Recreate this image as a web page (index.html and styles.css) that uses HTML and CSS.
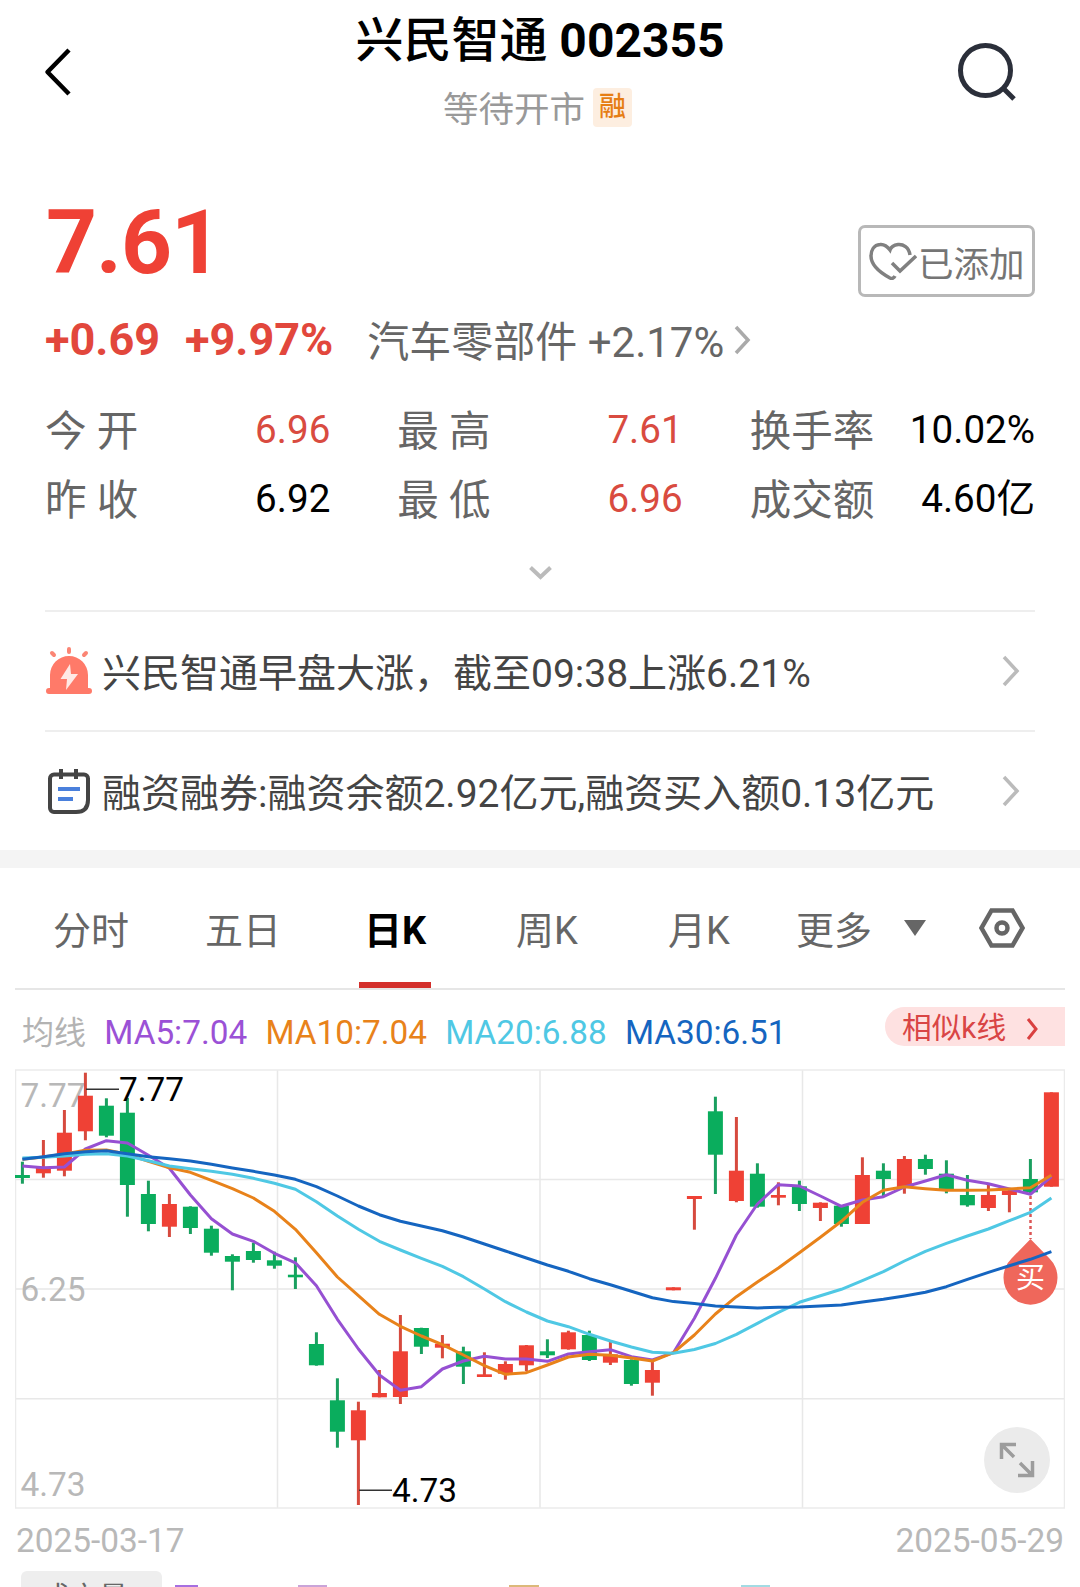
FILE: index.html
```html
<!DOCTYPE html>
<html lang="zh-CN">
<head>
    <meta charset="UTF-8">
    <title>兴民智通 002355</title>
    <link rel="stylesheet" href="styles.css">
</head>
<body>
    <!-- 顶部导航 -->
    <header class="header">
        <svg class="back" width="30" height="50" viewBox="0 0 30 50"><path d="M26 3 4.500 25 26 47" fill="none" stroke="#000" stroke-width="4.500" stroke-linejoin="round"/></svg>
        <div class="header-center">
            <h1>兴民智通 <b>002355</b></h1>
            <div class="status"><span>等待开市</span><span class="badge">融</span></div>
        </div>
        <svg class="search" width="62" height="62" viewBox="0 0 62 62" fill="none" stroke="#2b2f3a" stroke-width="5"><circle cx="29.500" cy="28.500" r="25"/><path d="M46 45 58 57"/></svg>
    </header>

    <!-- 行情 -->
    <section class="quote">
        <div class="price-row">
            <div class="price">7.61</div>
            <button class="added">
                <svg width="48" height="38" viewBox="0 0 48 38" fill="none" stroke="#808080" stroke-width="3.500"><path d="M41 13C40 5 34 2 29 2.500 25 3 22 5 21 8 18 4 15 2 11 2.500 5 3 2 8 2 14c0 9 8 16 19 22 2 1 4 0 5-2" /><path d="m23 21 8 8 16-15"/></svg>
                <span>已添加</span>
            </button>
        </div>
        <div class="change-row">
            <b class="change">+0.69</b>
            <b class="percent">+9.97%</b>
            <span class="industry">汽车零部件 +2.17%</span>
            <svg width="18" height="32" viewBox="0 0 18 32"><path d="m3 3 12 13L3 29" fill="none" stroke="#aaa" stroke-width="3.500"/></svg>
        </div>
        <div class="stats">
            <div class="stat"><span class="label">今 开</span><span class="up">6.96</span></div>
            <div class="stat"><span class="label">最 高</span><span class="up">7.61</span></div>
            <div class="stat"><span class="label">换手率</span><span>10.02%</span></div>
            <div class="stat"><span class="label">昨 收</span><span>6.92</span></div>
            <div class="stat"><span class="label">最 低</span><span class="up">6.96</span></div>
            <div class="stat"><span class="label">成交额</span><span>4.60亿</span></div>
        </div>
        <div class="more">
            <svg width="24" height="16" viewBox="0 0 24 16"><path d="m2.500 3.500 10 9.500 10-9.500" fill="none" stroke="#bbb" stroke-width="4"/></svg>
        </div>
        <div class="news">
            <svg class="news-icon" width="46" height="50" viewBox="0 0 46 50">
                <g stroke="#fb8574" stroke-width="4" stroke-linecap="round"><path d="M23 3v3M6 7l2 2M40 7l-2 2"/></g>
                <path d="M4 42V29a19 19 0 0 1 38 0v13h1a2.500 2.500 0 0 1 0 6H3a2.500 2.500 0 0 1 0-6z" fill="#ff7a69"/>
                <path d="M24 18 14.500 33H21l-1 11 12-16h-7z" fill="#ffe9e5"/>
            </svg>
            <span class="news-text">兴民智通早盘大涨，截至09:38上涨6.21%</span>
            <svg class="arrow" width="20" height="32" viewBox="0 0 20 32"><path d="m3 2 13 14L3 30" fill="none" stroke="#bbb" stroke-width="3.500"/></svg>
        </div>
        <div class="news">
            <svg class="news-icon" width="46" height="50" viewBox="0 0 46 50">
                <path d="M8 8.500h30a4 4 0 0 1 4 4V34q0 12-12 12H8a4 4 0 0 1-4-4V12.500a4 4 0 0 1 4-4z" fill="none" stroke="#444" stroke-width="4" stroke-linejoin="round"/>
                <path d="M15 3v10M30 3v10" stroke="#444" stroke-width="4"/>
                <path d="M12 23h22M12 33h15" stroke="#4a80dc" stroke-width="4"/>
            </svg>
            <span class="news-text">融资融券:融资余额2.92亿元,融资买入额0.13亿元</span>
            <svg class="arrow" width="20" height="32" viewBox="0 0 20 32"><path d="m3 2 13 14L3 30" fill="none" stroke="#bbb" stroke-width="3.500"/></svg>
        </div>
    </section>

    <!-- K线 -->
    <section class="kline">
        <nav class="tabs">
            <a>分时</a>
            <a>五日</a>
            <a class="active">日K</a>
            <a>周K</a>
            <a>月K</a>
            <a class="tab-more">更多</a>
            <svg class="triangle" width="24" height="16" viewBox="0 0 24 16"><path d="M1 0h22L12 16z" fill="#666"/></svg>
            <svg class="setting" width="46" height="40" viewBox="0 0 46 40" fill="none" stroke="#666" stroke-width="4.500"><path d="M12.500 2.500h21L43.500 20l-10 17.500h-21L2.500 20z"/><circle cx="23" cy="20" r="5.500"/></svg>
        </nav>
        <div class="legend">
            <span class="legend-title">均线</span>
            <span class="ma5">MA5:7.04</span>
            <span class="ma10">MA10:7.04</span>
            <span class="ma20">MA20:6.88</span>
            <span class="ma30">MA30:6.51</span>
            <div class="similar">相似k线<svg width="14" height="24" viewBox="0 0 14 24"><path d="m2 3 8 10-8 10" fill="none" stroke="#d94040" stroke-width="3"/></svg></div>
        </div>
        <div class="chart">
            <svg id="chart" width="1050" height="440" viewBox="15 1069 1050 440"></svg>
            <div class="expand">
                <svg width="36" height="36" viewBox="0 0 36 36" fill="none" stroke="#9c9c9c" stroke-width="3.500"><path d="M2.500 17V2.500H17M2.500 2.500 15 15M33.500 19v14.500H19M33.500 33.500 21 21"/></svg>
            </div>
        </div>
        <div class="dates"><span>2025-03-17</span><span>2025-05-29</span></div>
        <div class="volume">
            <span class="chip">成交量</span>
            <i class="v1"></i><i class="v2"></i><i class="v3"></i><i class="v4"></i>
        </div>
    </section>

    <script src="chart.js"></script>
</body>
</html>
```

FILE: styles.css
```css
* {
    box-sizing: border-box;
}
body {
    margin: 0;
    width: 1080px;
    height: 1587px;
    overflow: hidden;
    background: #fff;
    color: #000;
    font-family: Roboto, "Noto Sans CJK SC", sans-serif;
    line-height: 1.2;
}
svg {
    display: block;
    flex: none;
}

/* 顶部导航 */
.header {
    display: flex;
    justify-content: space-between;
    height: 195px;
    padding: 11px 62px 0 43px;
}
.back {
    margin-top: 36px;
}
.search {
    margin-top: 31px;
}
.header-center {
    margin-left: 51px;
    text-align: center;
}
h1 {
    margin: 0;
    font-size: 48px;
    line-height: 59px;
    font-weight: 500;
}
.status {
    display: flex;
    justify-content: center;
    align-items: center;
    gap: 8px;
    margin: 14px 5px 0 0;
    font-size: 35.5px;
    line-height: 40px;
    color: #999;
}
.status span:first-child {
    padding-top: 6px;
}
.badge {
    width: 39px;
    height: 39px;
    border-radius: 4px;
    background: #fdeee0;
    color: #e67e14;
    font-size: 27px;
    font-weight: 500;
    line-height: 39px;
}

/* 行情 */
.quote {
    padding: 0 45px;
}
.price-row {
    display: flex;
    justify-content: space-between;
    height: 115px;
}
.price {
    padding-left: 1px;
    color: #ef4135;
    font-size: 89px;
    line-height: 96px;
    font-weight: 700;
    letter-spacing: -1px;
}
.added {
    display: flex;
    align-items: center;
    width: 177px;
    height: 72px;
    margin-top: 30px;
    padding: 0 0 0 8px;
    border: 3px solid #b8b8b8;
    border-radius: 7px;
    background: #fff;
    color: #757575;
    font-family: inherit;
    font-size: 35.5px;
    line-height: 42px;
}
.added span {
    padding: 7px 0 0 1px;
    white-space: nowrap;
}
.change-row {
    display: flex;
    align-items: center;
    height: 60px;
    color: #e2473c;
    font-size: 45px;
}
.percent {
    margin-left: 25px;
}
.industry {
    margin: 0 9px 0 34px;
    padding-top: 6px;
    color: #666;
    font-size: 42px;
}
.stats {
    display: grid;
    grid-template-columns: repeat(3, 1fr);
    grid-auto-rows: 69px;
    column-gap: 67px;
    margin-top: 26px;
}
.stat {
    display: flex;
    justify-content: space-between;
    align-items: center;
    font-size: 38.6px;
}
.label {
    padding-top: 2px;
    color: #666;
    font-size: 41.5px;
}
.up {
    color: #d94b40;
}
.more {
    display: flex;
    justify-content: center;
    align-items: center;
    height: 76px;
}
.news {
    display: flex;
    align-items: center;
    height: 120px;
    border-top: 2px solid #eee;
}
.news-icon {
    margin-left: 1px;
}
.news-text {
    flex: 1;
    margin-left: 10px;
    padding-top: 7px;
    color: #444;
    font-size: 39px;
    white-space: nowrap;
}
.arrow {
    margin-right: 14px;
}

/* K线 */
.kline {
    border-top: 18px solid #f4f4f4;
    padding: 0 15px;
}
.tabs {
    display: flex;
    align-items: center;
    height: 122px;
    border-bottom: 2px solid #e6e6e6;
    color: #666;
    font-size: 38px;
}
.tabs a {
    width: 152px;
    height: 122px;
    line-height: 129px;
    text-align: center;
}
.tabs .active {
    color: #000;
    font-weight: 700;
}
.tabs .active::after {
    content: "";
    display: block;
    width: 72px;
    height: 6px;
    margin: -14px auto 0;
    background: #d32f2b;
}
.tabs .tab-more {
    width: 118px;
}
.triangle {
    margin-left: 10px;
}
.setting {
    margin-left: 52px;
}
.legend {
    display: flex;
    align-items: center;
    height: 79px;
    padding-left: 7px;
    font-size: 33.3px;
}
.legend span {
    margin-right: 18.3px;
    padding-top: 6px;
}
.legend .legend-title {
    padding-top: 8px;
    color: #b3b3b3;
    font-size: 32px;
}
.ma5 { color: #9b51d6; }
.ma10 { color: #e8821a; }
.ma20 { color: #4fc8e4; }
.ma30 { color: #1565c0; }
.similar {
    display: flex;
    align-items: center;
    gap: 20px;
    width: 180px;
    height: 39px;
    margin: -6px 0 0 auto;
    padding-left: 17px;
    border-radius: 20px 0 0 20px;
    background: #fee1e1;
    color: #d94545;
    font-size: 29.7px;
    line-height: 43px;
    padding-top: 2px;
}
.chart {
    position: relative;
}
.chart text {
    font-size: 33.4px;
}
.chart .buy {
    font-size: 29px;
}
.chart polyline {
    fill: none;
    stroke-width: 3;
    stroke-linejoin: round;
}
.expand {
    position: absolute;
    right: 15px;
    bottom: 16px;
    display: flex;
    justify-content: center;
    align-items: center;
    width: 66px;
    height: 66px;
    border-radius: 50%;
    background: #ebebeb;
}
.dates {
    display: flex;
    justify-content: space-between;
    height: 62px;
    padding: 0 1px;
    line-height: 63px;
    color: #b8b8b8;
    font-size: 33.4px;
}
.volume {
    display: flex;
    padding-left: 6px;
}
.chip {
    width: 141px;
    height: 50px;
    padding-left: 20px;
    border-radius: 6px;
    background: #eee;
    color: #666;
    font-size: 29px;
    line-height: 55px;
}
.volume i {
    height: 10px;
    margin-top: 14px;
}
.v1 { width: 23px; margin-left: 13px; background: #a66fe0; }
.v2 { width: 29px; margin-left: 100px; background: #c9a4d8; }
.v3 { width: 30px; margin-left: 182px; background: #dcb97a; }
.v4 { width: 29px; margin-left: 202px; background: #a3dbe3; }
```

FILE: chart.js
```js
var UP = "#ef4135", DOWN = "#0aad5d";

// [涨跌, 最高, 最低, 实体上沿, 实体下沿]
var candles = [
    [0, 1161.7, 1183.7, 1175, 1178], [1, 1140, 1177.7, 1167.5, 1173.3], [1, 1110, 1176.3, 1132.7, 1170.7],
    [1, 1072.7, 1140.3, 1095.7, 1131.3], [0, 1098.3, 1137.3, 1105.7, 1135.7], [0, 1098, 1216.7, 1112.7, 1185],
    [0, 1180.7, 1231.3, 1194, 1224], [1, 1194, 1237, 1204, 1226.7], [0, 1206.3, 1234, 1206.7, 1228],
    [0, 1225.7, 1255.7, 1228.7, 1252.7], [0, 1254.3, 1290.3, 1256, 1261.7], [0, 1242.7, 1262.7, 1251, 1260],
    [0, 1251.7, 1268.7, 1260.3, 1265.7], [0, 1257.3, 1289, 1274.7, 1277.3], [0, 1332.3, 1365.7, 1344, 1365.3],
    [0, 1378.3, 1447.7, 1400.3, 1431.7], [1, 1401.7, 1505, 1410.3, 1440.3], [1, 1370, 1397.3, 1393, 1397.3],
    [1, 1315, 1404, 1351.3, 1397], [0, 1327.7, 1354, 1328, 1346.7], [1, 1335, 1358.3, 1343.7, 1347.7],
    [0, 1346.7, 1384, 1351.3, 1366.7], [1, 1352.3, 1377, 1374.3, 1377], [1, 1361.3, 1379.7, 1364, 1373.7],
    [1, 1345, 1371.3, 1345.3, 1365.3], [0, 1339.3, 1358, 1351.3, 1355.3], [1, 1330.7, 1349.7, 1332.3, 1349.3],
    [0, 1330.7, 1361, 1335, 1360], [1, 1341, 1365, 1354.3, 1362.7], [0, 1359.3, 1385.7, 1360, 1384],
    [1, 1361.3, 1395.7, 1370, 1382.7], [1, 1287.3, 1290.3, 1287.3, 1290.3], [1, 1196, 1229.7, 1196, 1199],
    [0, 1096.7, 1194, 1111.3, 1154.7], [1, 1117, 1202.3, 1170.7, 1201], [0, 1163.3, 1207.7, 1173.7, 1206.7],
    [1, 1182.3, 1205.3, 1195, 1197.7], [0, 1180.7, 1211, 1186.3, 1204], [1, 1202.3, 1221, 1202.7, 1208],
    [0, 1205.3, 1226.7, 1205.7, 1224], [1, 1157.3, 1224, 1175, 1224], [0, 1163.3, 1196.7, 1170.7, 1179],
    [1, 1156, 1193.7, 1159, 1187.3], [0, 1154.7, 1174.7, 1159, 1169], [0, 1160.3, 1193.3, 1173.7, 1191],
    [0, 1175, 1206.7, 1195, 1205.3], [1, 1183.7, 1211, 1195, 1208], [1, 1189.3, 1212.3, 1190.3, 1195],
    [0, 1159, 1193.3, 1179, 1192.3], [1, 1092.3, 1186.7, 1092.3, 1186.7]
];

// 均线
var lines = [
    ["#9650d2", [1166, 1167.7, 1167, 1149, 1140.7, 1143, 1155.3, 1168.3, 1195, 1218.7, 1234, 1241.3, 1253.3, 1262.8, 1285.7, 1319.3, 1349, 1375, 1390.3, 1386.7, 1369, 1361, 1356.3, 1359, 1359, 1361.3, 1354, 1351.7, 1349.7, 1356.7, 1360, 1352.7, 1318.3, 1278.3, 1235, 1204, 1184.7, 1186, 1196, 1206.3, 1200, 1196.7, 1187, 1181, 1174.7, 1180.3, 1183.7, 1189, 1194.3, 1176.5]],
    ["#e8821a", [1159.3, 1157, 1154, 1150.3, 1150, 1154.3, 1161.3, 1167.7, 1172.3, 1180.3, 1188.7, 1198, 1211.3, 1229.3, 1252.7, 1277, 1295.7, 1314.3, 1326.3, 1336, 1344.7, 1355, 1365.7, 1374.3, 1372.7, 1365, 1357, 1354.3, 1355.3, 1358, 1361, 1352.7, 1335, 1314, 1296.7, 1282, 1268, 1252.7, 1237.3, 1221.3, 1202.3, 1190.3, 1186.7, 1188.7, 1190.3, 1190.3, 1190, 1189, 1187.7, 1175.3]],
    ["#4fc8e4", [1158, 1157.3, 1156, 1154.3, 1153.7, 1156, 1160.7, 1166, 1168.7, 1171.3, 1174.3, 1178.3, 1183.3, 1189.3, 1201.7, 1216, 1229.3, 1241.3, 1250, 1258.3, 1266.3, 1276.7, 1289, 1301.7, 1312, 1321, 1326.7, 1334.3, 1341, 1347, 1352.3, 1353.3, 1349.5, 1343.5, 1334.3, 1323.3, 1312.3, 1302.3, 1295.7, 1289.3, 1280.7, 1271.7, 1261, 1251.3, 1243.3, 1236, 1229, 1220.7, 1212.3, 1198]],
    ["#1565c0", [1159.3, 1156.7, 1153.7, 1151.7, 1150.7, 1153.7, 1156.7, 1158.7, 1161, 1164.3, 1168, 1171.3, 1175, 1179.3, 1186.7, 1196, 1206, 1214.7, 1221.3, 1226, 1230.7, 1237, 1244, 1251, 1258, 1265, 1271.3, 1278.7, 1284.7, 1291.3, 1297.7, 1301.6, 1303.5, 1306, 1307, 1308, 1307.3, 1307, 1306, 1305, 1302, 1299.3, 1296, 1292.3, 1286.7, 1279.3, 1272.3, 1265.7, 1259.3, 1251.7]]
];

function x(i) {
    return 22.4 + i * 21;
}

function label(px, py, text, color) {
    return '<text x="' + px + '" y="' + py + '" fill="' + color + '">' + text + '</text>';
}

var out = '<path d="M277.500 1070v438M540 1070v438M802.500 1070v438M15 1179.500h1050M15 1289h1050M15 1398.700h1050" stroke="#e8e8e8" stroke-width="1.500"/>';
out += '<rect x="15.500" y="1070" width="1049" height="438" fill="none" stroke="#ebebeb" stroke-width="1.500"/>';
out += label(20.5, 1107, "7.77", "#b8b8b8") + label(20.5, 1301, "6.25", "#b8b8b8") + label(20.5, 1496, "4.73", "#b8b8b8");

candles.forEach(function (c, i) {
    var color = c[0] ? UP : DOWN;
    out += '<rect x="' + (x(i) - 1.5) + '" y="' + c[1] + '" width="3" height="' + (c[2] - c[1]) + '" fill="' + (c[0] ? "#d64a3e" : "#1a9f5f") + '"/>';
    out += '<rect x="' + (x(i) - 7.5) + '" y="' + c[3] + '" width="15" height="' + (c[4] - c[3]) + '" fill="' + color + '"/>';
});

// 买入标记
out += '<path d="M1030.500 1196v43" stroke="#dc5555" stroke-width="2.500" stroke-dasharray="3 3"/>';
out += '<path d="M1030.500 1239 1049.500 1258.500a27 27 0 1 1-38 0z" fill="#ef675b"/>';
out += '<text x="1030.500" y="1288" fill="#fff" text-anchor="middle" class="buy">买</text>';

lines.forEach(function (l) {
    var points = l[1].map(function (y, i) { return x(i) + "," + y; });
    out += '<polyline points="' + points.join(" ") + '" stroke="' + l[0] + '"/>';
});

out += '<path d="M86 1089.300h33M359 1490.300h33" stroke="#333" stroke-width="1.500"/>';
out += label(119, 1101, "7.77", "#000") + label(392, 1502, "4.73", "#000");

document.getElementById("chart").innerHTML = out;
```
